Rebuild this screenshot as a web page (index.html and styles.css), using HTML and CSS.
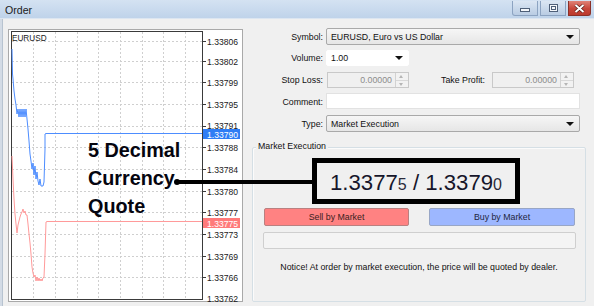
FILE: index.html
```html
<!DOCTYPE html>
<html>
<head>
<meta charset="utf-8">
<link rel="stylesheet" href="styles.css">
</head>
<body>
<div class="window">
  <div class="titlebar">
    <span class="title">Order</span>
    <div class="controls">
      <div class="cbtn min"><span class="min-glyph"></span></div>
      <div class="cbtn max"><span class="max-glyph"></span></div>
      <div class="cbtn close">
        <svg width="11" height="9" viewBox="0 0 11 9"><path d="M1.5 1 L9.5 8 M9.5 1 L1.5 8" stroke="#4a1510" stroke-width="3.2"/><path d="M1.5 1 L9.5 8 M9.5 1 L1.5 8" stroke="#fff" stroke-width="2"/></svg>
      </div>
    </div>
  </div>
  <div class="body">
    <div class="chart">
      <svg width="235" height="273" viewBox="0 0 235 273">
        <rect x="0.5" y="0.5" width="234" height="272" fill="#fff" stroke="#a9a9a9"/>
        <g stroke="#cfcfcf" stroke-dasharray="2 2" stroke-width="1">
          <path d="M25.5 3V270 M47.5 3V270 M69.5 3V270 M90.5 3V270 M112.5 3V270 M134.5 3V270 M155.5 3V270 M177.5 3V270"/>
          <path d="M4 12.5H194 M4 32.5H194 M4 53.5H194 M4 75.5H194 M4 97.5H194 M4 118.5H194 M4 140.5H194 M4 162.5H194 M4 183.5H194 M4 205.5H194 M4 227.5H194 M4 248.5H194"/>
        </g>
        <rect x="3.5" y="2.5" width="191" height="268" fill="none" stroke="#3a3a3a"/>
        <g stroke="#3a3a3a">
          <path d="M195 12.5h3 M195 32.5h3 M195 53.5h3 M195 75.5h3 M195 97.5h3 M195 118.5h3 M195 140.5h3 M195 162.5h3 M195 183.5h3 M195 205.5h3 M195 227.5h3 M195 248.5h3"/>
        </g>
        <polyline fill="none" stroke="#4d8dff" stroke-width="1" points="4,20 4.5,45 5,50 6,62 7,70 8,76 9,85 10,80 11,88 12,80 13,88 14,80 15,88 16,80 17,88 18,80 19,90 20,100 21,112 22,125 23,132 24,140 25,134 26,146 27,137 28,150 29,143 30,152 31,156 32,150 33,157 34,157 35,157 36,153 37,120 37,105 38,104.5 194,104.5"/>
        <polyline fill="none" stroke="#ff9a9a" stroke-width="1" points="4,127 5,150 6,170 7,185 8,195 9,204 10,196 11,192 12,188 13,185 14,183 15,180 16,184 17,182 18,186 19,186 20,195 21,205 22,214 23,225 24,238 25,244 26,248 27,246 28,252 29,248 30,252 31,249 32,252 33,250 34,252 35,249 36,248 37,225 38,193 39,192.5 194,192.5"/>
        <text class="sym" x="4" y="12">EURUSD</text>
        <g class="ax">
          <text x="199" y="15.5">1.33806</text>
          <text x="199" y="35.5">1.33802</text>
          <text x="199" y="56.5">1.33799</text>
          <text x="199" y="78.5">1.33795</text>
          <text x="199" y="100">1.33791</text>
          <text x="199" y="121.5">1.33788</text>
          <text x="199" y="143.5">1.33784</text>
          <text x="199" y="165.5">1.33780</text>
          <text x="199" y="186.5">1.33777</text>
          <text x="199" y="208.5">1.33773</text>
          <text x="199" y="230.5">1.33769</text>
          <text x="199" y="251.5">1.33766</text>
          <text x="199" y="272.5">1.33762</text>
        </g>
        <rect x="195" y="100" width="37" height="10" fill="#2f7df5"/>
        <text class="ax hl" x="199" y="108.5">1.33790</text>
        <rect x="195" y="189" width="37" height="10" fill="#ff7a7a"/>
        <text class="ax hl" x="199" y="197.5">1.33775</text>
      </svg>
    </div>
    <div class="panel">
      <div class="form">
        <label class="lbl">Symbol:</label>
        <div class="combo wide"><span>EURUSD, Euro vs US Dollar</span><i class="arrow"></i></div>
        <label class="lbl">Volume:</label>
        <div class="combo vol"><span>1.00</span><i class="arrow"></i></div>
        <label class="lbl">Stop Loss:</label>
        <div class="pair">
          <div class="spin"><span class="val">0.00000</span><span class="spinbtn"><i class="up"></i><i class="dn"></i></span></div>
          <label class="lbl tp">Take Profit:</label>
          <div class="spin"><span class="val">0.00000</span><span class="spinbtn"><i class="up"></i><i class="dn"></i></span></div>
        </div>
        <label class="lbl">Comment:</label>
        <div class="textbox"></div>
        <label class="lbl">Type:</label>
        <div class="combo wide"><span>Market Execution</span><i class="arrow"></i></div>
      </div>
      <div class="group">
        <div class="legend">Market Execution</div>
        <div class="quote"><span class="big">1.3377</span><span class="small">5</span><span class="big"> / 1.3379</span><span class="small">0</span></div>
        <div class="btnrow">
          <div class="btn sell">Sell by Market</div>
          <div class="btn buy">Buy by Market</div>
        </div>
        <div class="progress"></div>
        <div class="notice">Notice! At order by market execution, the price will be quoted by dealer.</div>
      </div>
    </div>
  </div>
  <div class="callout">5 Decimal<br>Currency<br>Quote</div>
  <div class="pointer"><span class="dot"></span><span class="line"></span></div>
</div>
</body>
</html>
```
FILE: styles.css
```css
* { box-sizing: border-box; }
html, body { margin: 0; padding: 0; }
body {
  background: #f0f0f0;
  font-family: "Liberation Sans", Arial, sans-serif;
  font-size: 8.8px;
  color: #111;
}
.window {
  position: relative;
  width: 594px;
  height: 306px;
  background: #f0f0f0;
  overflow: hidden;
  box-shadow: inset 2px 0 0 #d3dbe5, inset 3px 0 0 #b7c3d0;
}
.titlebar {
  height: 19px;
  display: flex;
  align-items: flex-start;
  justify-content: space-between;
  background: linear-gradient(#d4e2f2, #bfd3ea);
  border-bottom: 1px solid #dce6f1;
}
.title {
  font-family: "Liberation Sans", Arial, sans-serif;
  font-size: 10.6px;
  color: #1b1b1b;
  padding: 4px 0 0 5px;
}
.controls {
  display: flex;
  gap: 2px;
  padding: 1px 3px 0 0;
}
.cbtn {
  height: 15px;
  border: 1px solid #8ca3c1;
  border-top: none;
  display: flex;
  align-items: center;
  justify-content: center;
}
.min, .max {
  width: 26px;
  background: linear-gradient(#dbe6f3, #b9cce3);
}
.min { border-radius: 0 0 0 3px; }
.max { border-radius: 0; }
.close {
  width: 23px;
  background: linear-gradient(#e08377, #c7463a 55%, #bb3a2e);
  border-color: #8b3128;
  border-radius: 0 0 3px 0;
}
.min-glyph {
  width: 10px;
  height: 4px;
  margin-top: 4px;
  background: #f4f7fb;
  border: 1px solid #4e5f78;
}
.max-glyph {
  width: 9px;
  height: 8px;
  border: 1px solid #4e5f78;
  box-shadow: inset 0 0 0 1px #f4f7fb, inset 0 0 0 2px #4e5f78;
  background: #f4f7fb;
}
.body {
  display: flex;
  gap: 9px;
  padding: 9px 0 0 8px;
}
.chart {
  margin-top: 1px;
  width: 235px;
  height: 273px;
  flex: none;
}
.chart svg { display: block; }
.chart text {
  font-family: "Liberation Sans", Arial, sans-serif;
  font-size: 8.6px;
  fill: #1a1a1a;
}
.chart text.sym { font-size: 8.2px; }
.chart text.hl { fill: #fff; }
.panel {
  width: 334px;
  display: flex;
  flex-direction: column;
}
.form {
  display: grid;
  grid-template-columns: 71px 254px;
  grid-auto-rows: 17px;
  column-gap: 3px;
  row-gap: 4.75px;
}
.lbl {
  display: flex;
  align-items: center;
  justify-content: flex-end;
  white-space: nowrap;
  color: #111;
}
.combo {
  position: relative;
  display: flex;
  align-items: center;
  padding-left: 4px;
  border: 1px solid #a9a9a9;
  border-radius: 2px;
  color: #111;
}
.combo.wide {
  background: linear-gradient(#f6f6f6, #e6e6e6);
}
.combo.vol {
  width: 83px;
  height: 16px;
  background: #fff;
  border-color: #ffffff;
}
.arrow {
  position: absolute;
  right: 5px;
  top: 50%;
  margin-top: -2px;
  width: 0;
  height: 0;
  border-left: 4px solid transparent;
  border-right: 4px solid transparent;
  border-top: 4px solid #111;
}
.pair {
  display: flex;
  align-items: center;
  height: 17px;
}
.spin {
  width: 82px;
  height: 16px;
  margin-left: 1px;
  display: flex;
  border: 1px solid #c9c9c9;
  background: #f0f0f0;
}
.spin .val {
  flex: 1;
  display: flex;
  align-items: center;
  justify-content: flex-end;
  padding-right: 3px;
  color: #8c8c8c;
}
.spinbtn {
  width: 13px;
  display: flex;
  flex-direction: column;
  border-left: 1px solid #d2d2d2;
}
.spinbtn i {
  flex: 1;
  position: relative;
  background: #f2f2f2;
}
.spinbtn i.up { border-bottom: 1px solid #d8d8d8; }
.spinbtn i::after {
  content: "";
  position: absolute;
  left: 3px;
  top: 2px;
  border-left: 2.5px solid transparent;
  border-right: 2.5px solid transparent;
}
.spinbtn i.up::after { border-bottom: 3px solid #b5b5b5; }
.spinbtn i.dn::after { border-top: 3px solid #b5b5b5; top: 2px; }
.lbl.tp {
  width: 82px;
  padding-right: 6px;
  height: 17px;
}
.textbox {
  height: 16px;
  background: #fff;
  border: 1px solid #e2e2e2;
}
.group {
  margin-top: 15px;
  height: 155px;
  border: 1px solid #d5dfe5;
  box-shadow: inset 1px 1px 0 #fbfbfb;
  border-radius: 2px;
  display: flex;
  flex-direction: column;
}
.legend {
  align-self: flex-start;
  margin: -7px 0 0 3px;
  padding: 0 2px;
  background: #f0f0f0;
  line-height: 10px;
  color: #111;
}
.quote {
  margin: 7px 0 0 59px;
  width: 208px;
  height: 46px;
  border: 5px solid #000;
  display: flex;
  align-items: baseline;
  justify-content: center;
  padding-top: 7px;
  color: #16162a;
  white-space: pre;
}
.quote .big { font-size: 22.2px; line-height: 26px; }
.quote .small { font-size: 16px; color: #2a2a3a; }
.btnrow {
  display: flex;
  gap: 20px;
  margin: 4px 0 0 11px;
}
.btn {
  height: 18px;
  display: flex;
  align-items: center;
  justify-content: center;
  border: 1px solid #a7a7a7;
  border-radius: 2px;
  color: #2a2a2a;
}
.sell { width: 145px; background: #ff8282; border-color: #b98080; color: #3a1e1e; }
.buy { width: 146px; background: #9db7ff; border-color: #98a6c6; color: #1e2540; }
.progress {
  margin: 6px 0 0 10px;
  width: 313px;
  height: 17px;
  border: 1px solid #cfcfcf;
  border-radius: 2px;
  background: #f4f4f4;
}
.notice {
  margin-top: 13px;
  line-height: 10px;
  text-align: center;
  color: #111;
}
.callout {
  position: absolute;
  left: 88px;
  top: 136px;
  font-family: "Liberation Sans", Arial, sans-serif;
  font-weight: bold;
  font-size: 19.8px;
  line-height: 28px;
  color: #05050f;
}
.pointer {
  position: absolute;
  left: 174px;
  top: 179px;
  display: flex;
  align-items: center;
}
.dot {
  width: 6px;
  height: 6px;
  border-radius: 50%;
  background: #000;
}
.line {
  width: 135px;
  height: 4px;
  margin-left: -2px;
  background: #000;
}
```
